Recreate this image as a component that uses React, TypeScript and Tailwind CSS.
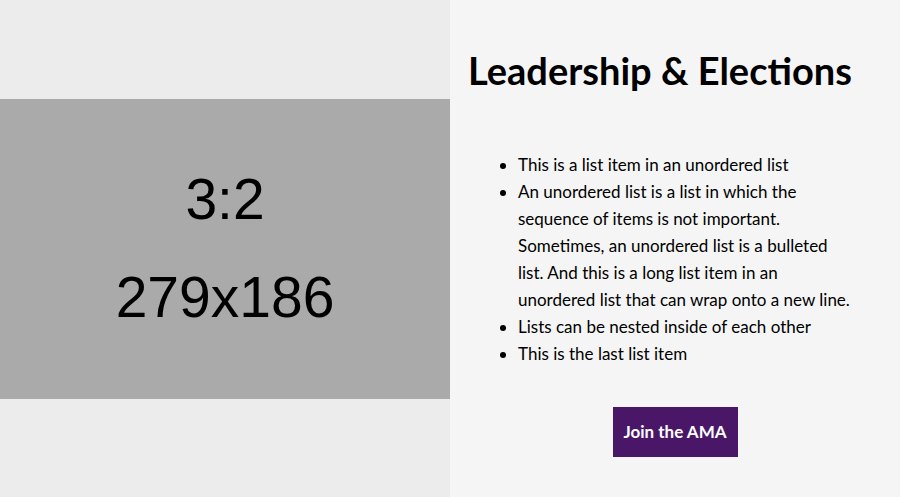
const items = [
  'This is a list item in an unordered list',
  'An unordered list is a list in which the sequence of items is not important. Sometimes, an unordered list is a bulleted list. And this is a long list item in an unordered list that can wrap onto a new line.',
  'Lists can be nested inside of each other',
  'This is the last list item',
]

export default function App() {
  return (
    <div className="flex h-[497px] w-[900px] font-['Lato',sans-serif]">
      <div className="flex w-[450px] items-center bg-[#ececec]">
        <div className="flex h-[300px] w-full flex-col items-center justify-center gap-[41px] bg-[#aaaaaa] font-['Liberation_Sans',sans-serif] text-[57px] leading-none text-black">
          <span>3:2</span>
          <span>279x186</span>
        </div>
      </div>
      <div className="flex w-[450px] flex-col bg-[#f5f5f5] pt-[48px] pr-5 pl-[18px]">
        <h2 className="text-[38px] leading-[44px] font-bold text-black">Leadership &amp; Elections</h2>
        <ul className="mt-[59px] list-disc pr-[23px] pl-[50px] text-[17px] leading-[27px] text-black">
          {items.map((t) => (
            <li key={t}>{t}</li>
          ))}
        </ul>
        <div className="mt-[40px] flex justify-center pl-[2px]">
          <a
            href="#ama"
            className="flex h-[50px] w-[125px] items-center justify-center bg-[#4a1768] text-[17px] font-bold text-white"
          >
            Join the AMA
          </a>
        </div>
      </div>
    </div>
  )
}
